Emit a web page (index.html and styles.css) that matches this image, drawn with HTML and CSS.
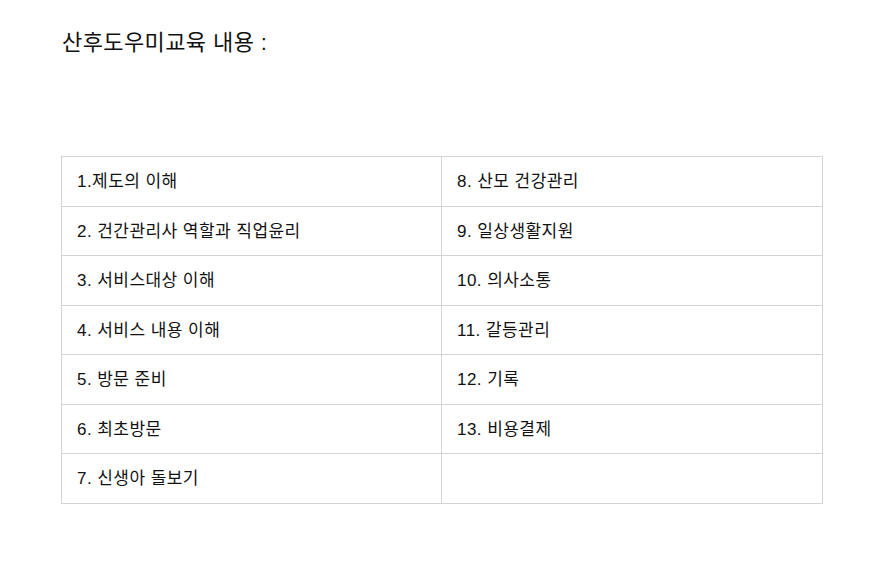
FILE: index.html
```html
<!DOCTYPE html>
<html lang="ko">
<head>
<meta charset="utf-8">
<link rel="stylesheet" href="styles.css">
</head>
<body>
<div class="page">
  <h2 class="title">산후도우미교육 내용 :</h2>
  <table class="curriculum">
    <colgroup><col class="col-left"><col></colgroup>
    <tr><td>1.제도의 이해</td><td>8. 산모 건강관리</td></tr>
    <tr><td>2. 건간관리사 역할과 직업윤리</td><td>9. 일상생활지원</td></tr>
    <tr><td>3. 서비스대상 이해</td><td>10. 의사소통</td></tr>
    <tr><td>4. 서비스 내용 이해</td><td>11. 갈등관리</td></tr>
    <tr><td>5. 방문 준비</td><td>12. 기록</td></tr>
    <tr><td>6. 최초방문</td><td>13. 비용결제</td></tr>
    <tr><td>7. 신생아 돌보기</td><td></td></tr>
  </table>
</div>
</body>
</html>
```
FILE: styles.css
```css
html, body {
  margin: 0;
  padding: 0;
  background: #fff;
}
body {
  font-family: "Liberation Sans", "Noto Sans CJK KR", sans-serif;
  color: #111;
}
.page {
  padding: 30px 0 0 61px;
  width: 762px;
}
.title {
  margin: 0 0 100px 1px;
  font-size: 22px;
  font-weight: normal;
  line-height: 26px;
  letter-spacing: 0.4px;
}
.curriculum {
  width: 762px;
  border-collapse: collapse;
  table-layout: fixed;
  font-size: 17px;
  letter-spacing: 0.45px;
}
.col-left {
  width: 380px;
}
.curriculum td {
  border: 1px solid #d4d4d4;
  padding: 16px 15px 14px;
  line-height: 18.5px;
  height: 18.5px;
  vertical-align: middle;
}
```
